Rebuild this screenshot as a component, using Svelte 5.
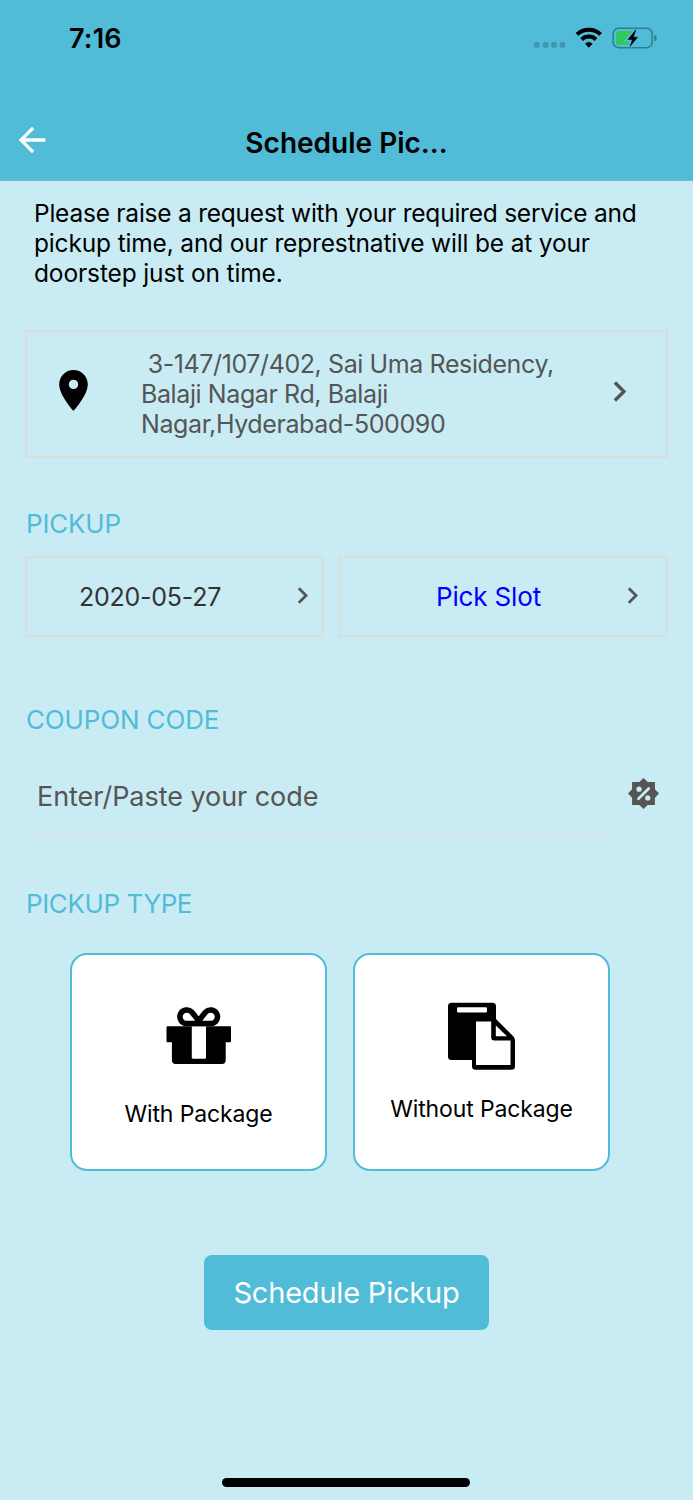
<script>
  const intro = [
    { text: 'Please raise a request with your required service and', spacing: -0.23 },
    { text: 'pickup time, and our represtnative will be at your', spacing: -0.16 },
    { text: 'doorstep just on time.', spacing: -0.13 }
  ];
  const address = ['\u00a03-147/107/402, Sai Uma Residency,', 'Balaji Nagar Rd, Balaji', 'Nagar,Hyderabad-500090'];
</script>

{#snippet chevron(size)}
  <svg class="chev" width={size} height={size} viewBox="0 0 24 24"><path d="M10 6 8.59 7.41 13.17 12l-4.58 4.59L10 18l6-6z" /></svg>
{/snippet}

<div class="screen">
  <header>
    <div class="status">
      <span class="time">7:16</span>
      <svg class="indicators" width="130" height="30" viewBox="530 23 130 30">
        <g fill="#3f97ad">
          <rect x="534" y="42" width="5.7" height="5.7" rx="1.8" />
          <rect x="542.7" y="42" width="5.700" height="5.700" rx="1.8" />
          <rect x="551.2" y="42" width="5.700" height="5.700" rx="1.8" />
          <rect x="559.6" y="42" width="5.700" height="5.700" rx="1.8" />
        </g>
        <g fill="none" stroke="#000" stroke-width="4">
          <path d="M577 34.400a17 17 0 0 1 23.600 0" />
          <path d="M581.600 39.500a10.400 10.400 0 0 1 14.400 0" />
        </g>
        <path d="M585 43.800a5.700 5.700 0 0 1 7.600 0l-3.800 3.900z" />
        <rect x="613.100" y="28.300" width="39" height="19.400" rx="5.500" fill="none" stroke="#337b8e" stroke-width="1.500" />
        <path d="M654.200 34.800q2.600.8 2.600 3.300t-2.600 3.300z" fill="#337b8e" />
        <rect x="616" y="31" width="18" height="14" rx="2.600" fill="#34c759" />
        <path d="M635.800 29.800 628 39.500h4.400l-2.400 7 7.600-9.300h-4.200z" stroke="#50bcd8" stroke-width="4.200" />
        <path d="M635.800 29.800 628 39.500h4.400l-2.400 7 7.600-9.300h-4.200z" stroke="#000" stroke-width=".5" />
      </svg>
    </div>
    <div class="nav">
      <svg class="back" width="40" height="40" viewBox="0 0 24 24"><path fill="#fff" d="M20 11H7.830l5.590-5.590L12 4l-8 8 8 8 1.410-1.410L7.830 13H20z" /></svg>
      <h1>Schedule Pic...</h1>
    </div>
  </header>

  <main>
    <p class="intro">
      {#each intro as line}<span style="letter-spacing: {line.spacing}px">{line.text}</span>{/each}
    </p>

    <section class="address">
      <svg class="pin" width="49" height="49" viewBox="0 0 24 24"><path d="M12 2C8.130 2 5 5.130 5 9c0 5.250 7 13 7 13s7-7.750 7-13c0-3.870-3.130-7-7-7zm0 9.300a2.300 2.300 0 1 1 0-4.600 2.300 2.300 0 0 1 0 4.600z" /></svg>
      <div class="lines">
        {#each address as line}<span>{line}</span>{/each}
      </div>
      {@render chevron(41)}
    </section>

    <h2 class="pickup">PICKUP</h2>
    <div class="slots">
      <div class="date"><span>2020-05-27</span>{@render chevron(33)}</div>
      <div class="slot"><span>Pick Slot</span>{@render chevron(33)}</div>
    </div>

    <h2 class="coupon-title">COUPON CODE</h2>
    <div class="coupon">
      <div class="field"><span>Enter/Paste your code</span></div>
      <svg class="percent" width="31" height="31" viewBox="0 0 32 32">
        <path fill="#555" d="M16 0l4.300 4.200H27.800v7.500L32 16l-4.200 4.300v7.500h-7.500L16 32l-4.300-4.200H4.200v-7.500L0 16l4.200-4.300V4.200h7.500z" />
        <path d="M10.800 21.400 21.400 10.800" stroke="#c9ecf4" stroke-width="2.900" stroke-linecap="round" />
        <circle cx="11.400" cy="11.600" r="2.700" fill="#c9ecf4" /><circle cx="20.400" cy="20.600" r="2.700" fill="#c9ecf4" />
      </svg>
    </div>

    <h2 class="type-title">PICKUP TYPE</h2>
    <div class="cards">
      <div class="card with">
        <svg width="66" height="58" viewBox="166 1007 66 58">
          <path d="M167.500 1026.300H230q1 0 1 1v14q0 1-1 1h-4.300v18q0 3.700-3.700 3.700h-46.400q-3.700 0-3.700-3.700v-18h-4.400q-1 0-1-1v-14q0-1 1-1z" />
          <path d="M191.800 1026.300h14.200v31q0 1.500-1.500 1.500h-11.200q-1.500 0-1.500-1.500z" fill="#fff" />
          <path d="M198.700 1023.600H186.500a6.850 6.850 0 1 1 5.300-11.500q3.200 3.700 6.900 9 3.700-5.300 6.900-9a6.850 6.850 0 1 1 5.300 11.500z" fill="none" stroke="#000" stroke-width="5.500" stroke-linejoin="round" />
        </svg>
        <span>With Package</span>
      </div>
      <div class="card without">
        <svg width="68" height="68" viewBox="447 1002 68 68">
          <path d="M451.500 1002.700h41q3.500 0 3.500 3.500V1019l17.500 17.500q1.500 1.500 1.500 4v25.800q0 3.500-3.500 3.500h-36q-3.500 0-3.500-3.500v-6.300h-20.500q-3.500 0-3.500-3.500v-50.300q0-3.500 3.500-3.500z" />
          <rect x="457" y="1007.300" width="30" height="5.200" rx="1.200" fill="#fff" />
          <path d="M476 1021.600h15.200v16q0 3 3 3h16.300V1065H476z" fill="#fff" />
          <path d="M495.800 1025.500 507 1036.300h-11.200z" fill="#fff" />
        </svg>
        <span>Without Package</span>
      </div>
    </div>

    <button><span>Schedule Pickup</span></button>
  </main>
  <div class="home"></div>
</div>

<style>
  :global(body) { margin: 0; background: #c9ecf4; }
  * { box-sizing: border-box; }
  .screen { width: 693px; height: 1500px; background: #c9ecf4; color: #000; font-family: Inter, "Liberation Sans", sans-serif; display: flex; flex-direction: column; overflow: hidden; }
  span, h1, h2 { white-space: nowrap; }
  svg { display: block; flex: none; }
  header { height: 181px; flex: none; background: #50bcd8; border-bottom: 1px solid #75b6c8; }
  .status { height: 76px; display: flex; justify-content: space-between; padding: 23px 33px 0 69px; }
  .time { font-size: 27px; line-height: 32px; font-weight: 600; letter-spacing: 0.2px; }
  .nav { display: grid; grid-template-columns: 40px 1fr 40px; padding: 44px 12px 0; }
  .back { margin-left: -0.5px; }
  h1 { margin: 7px 0 0; text-align: center; font-size: 28px; line-height: 32px; font-weight: 600; }
  main { flex: 1; display: flex; flex-direction: column; padding: 17px 25px 0; }
  .intro { margin: 0 0 41px 9px; font-size: 24.5px; line-height: 30px; display: flex; flex-direction: column; height: 91px; }
  .address { height: 128px; border: 2px solid #dcdcdc; display: flex; align-items: center; color: #555; }
  .pin { margin-left: 22px; margin-top: -7px; }
  .lines { display: flex; flex-direction: column; width: 457px; margin-left: 43px; font-size: 25px; line-height: 30px; letter-spacing: -0.4px; }
  .chev { fill: #555; }
  .address .chev { margin: -5px 0 0 0.5px; }
  h2 { margin: 0 0 0 1px; color: #50bcd8; font-size: 26px; line-height: 32px; font-weight: 400; letter-spacing: -0.2px; }
  .pickup { margin-top: 50px; }
  .slots { display: grid; grid-template-columns: 299px 329px; justify-content: space-between; width: 643px; height: 81px; margin-top: 16px; }
  .date, .slot { border: 2px solid #dcdcdc; display: flex; align-items: center; justify-content: space-between; }
  .date { padding: 0 3px 1px 52px; color: #333; font-size: 25px; letter-spacing: -0.25px; }
  .slot { padding: 0 17px 1px 95px; color: #00f; font-size: 26px; letter-spacing: -0.15px; }
  .slots .chev { margin-top: -1px; }
  .slots span { padding-top: 1px; }
  .coupon-title { margin-top: 67px; letter-spacing: -0.15px; }
  .coupon { height: 102px; display: flex; }
  .field { margin-left: 7px; width: 576px; border-bottom: 2px solid #d9e2e4; padding: 44px 0 0 5px; font-size: 27px; line-height: 34px; color: #555; letter-spacing: -0.05px; }
  .percent { margin: 42px 0 0 19.5px; }
  .type-title { margin-top: 50px; letter-spacing: -0.4px; }
  .cards { display: flex; gap: 26px; margin: 33px 0 0 45px; }
  .card { width: 257px; height: 218px; border: 2px solid #50bcd8; border-radius: 17px; background: #fff; display: flex; flex-direction: column; align-items: center; font-size: 23px; line-height: 30px; letter-spacing: -0.13px; }
  .with { padding-top: 52px; }
  .with span { margin-top: 34px; }
  .without { padding-top: 47px; }
  .without svg { margin-left: -2px; }
  .without span { margin-top: 24px; }
  button { align-self: flex-start; margin: 84px 0 0 179px; width: 285px; height: 75px; padding: 0; border: 0; border-radius: 8px; background: #50bcd8; color: #fff; font: 400 29px/36px Inter, "Liberation Sans", sans-serif; letter-spacing: -0.2px; }
  .home { width: 248px; height: 9px; border-radius: 5px; background: #000; margin: 0 0 13px 222px; }
</style>
